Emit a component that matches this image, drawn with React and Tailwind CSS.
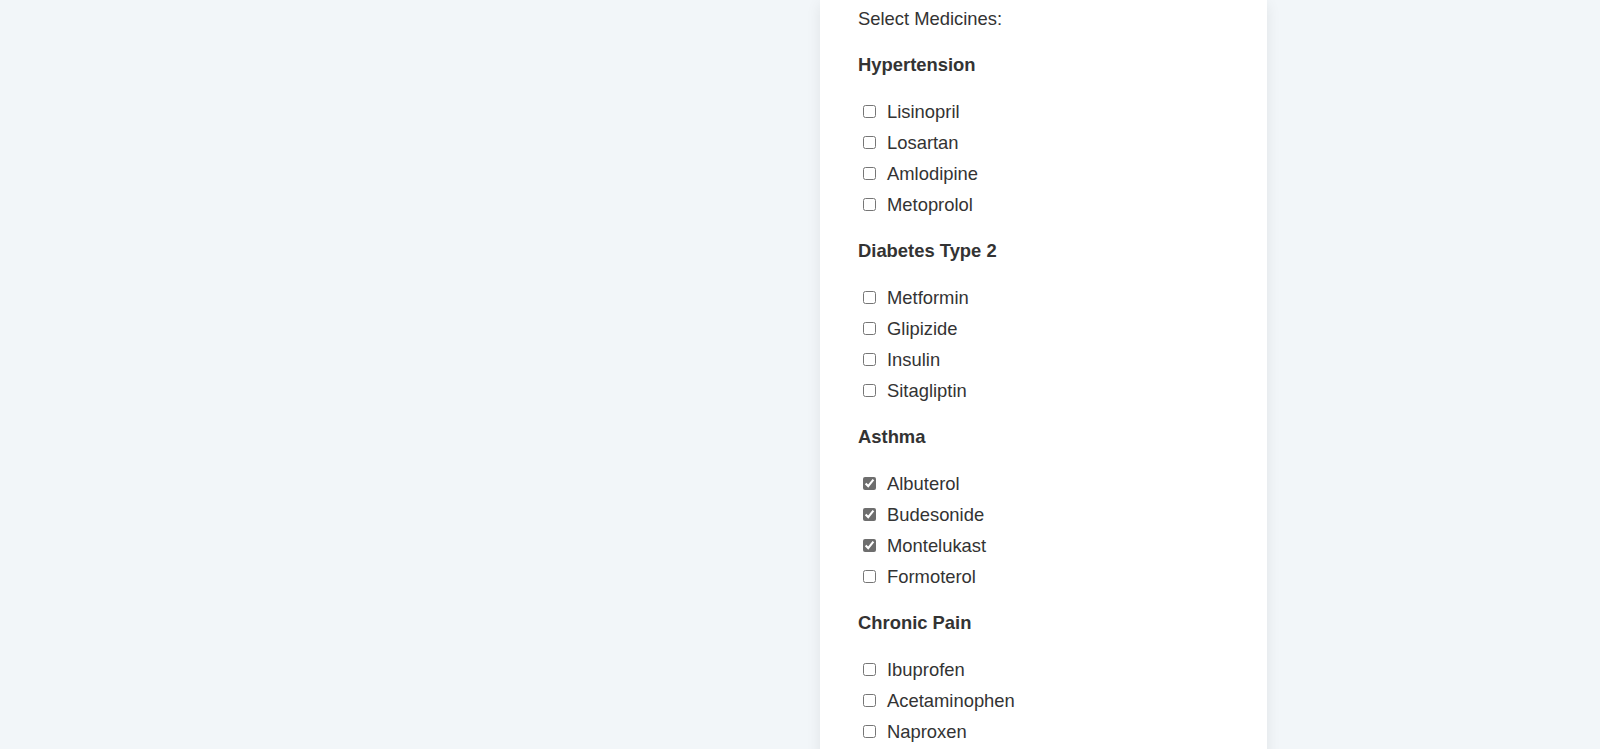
import React, { useState } from "react";

const groups = [
  { title: "Hypertension", items: ["Lisinopril", "Losartan", "Amlodipine", "Metoprolol"] },
  { title: "Diabetes Type 2", items: ["Metformin", "Glipizide", "Insulin", "Sitagliptin"] },
  { title: "Asthma", items: ["Albuterol", "Budesonide", "Montelukast", "Formoterol"] },
  { title: "Chronic Pain", items: ["Ibuprofen", "Acetaminophen", "Naproxen", "Tramadol"] },
];

export default function App() {
  const [checked, setChecked] = useState({ Albuterol: true, Budesonide: true, Montelukast: true });
  return (
    <div
      className="h-screen overflow-hidden bg-[#f2f6f9] text-[#333333] flex"
      style={{ fontFamily: '"Liberation Sans", Arial, sans-serif' }}
    >
      <div className="w-1/2" />
      <div className="w-1/2 pl-[20px]">
        <div className="w-[447px] bg-white shadow-[0_4px_14px_rgba(0,0,0,0.08)] pl-[38px] pr-[38px] pt-[8px] pb-10 flex flex-col">
          <div className="text-[18.4px] leading-[21px] mb-[5px]">Select Medicines:</div>
          {groups.map((g) => (
            <div key={g.title} className="pt-[20px] flex flex-col">
              <h3 className="text-[18.4px] leading-[21px] font-bold m-0 mb-[21px]">{g.title}</h3>
              {g.items.map((it) => (
                <label key={it} className="flex items-center h-[31px] text-[18.4px] leading-[21px] cursor-pointer">
                  <input
                    type="checkbox"
                    className="w-[13px] h-[13px] m-0 ml-[5px] accent-[#6e6e6e]"
                    checked={!!checked[it]}
                    onChange={() => setChecked((c) => ({ ...c, [it]: !c[it] }))}
                  />
                  <span className="ml-[11px]">{it}</span>
                </label>
              ))}
            </div>
          ))}
        </div>
      </div>
    </div>
  );
}
